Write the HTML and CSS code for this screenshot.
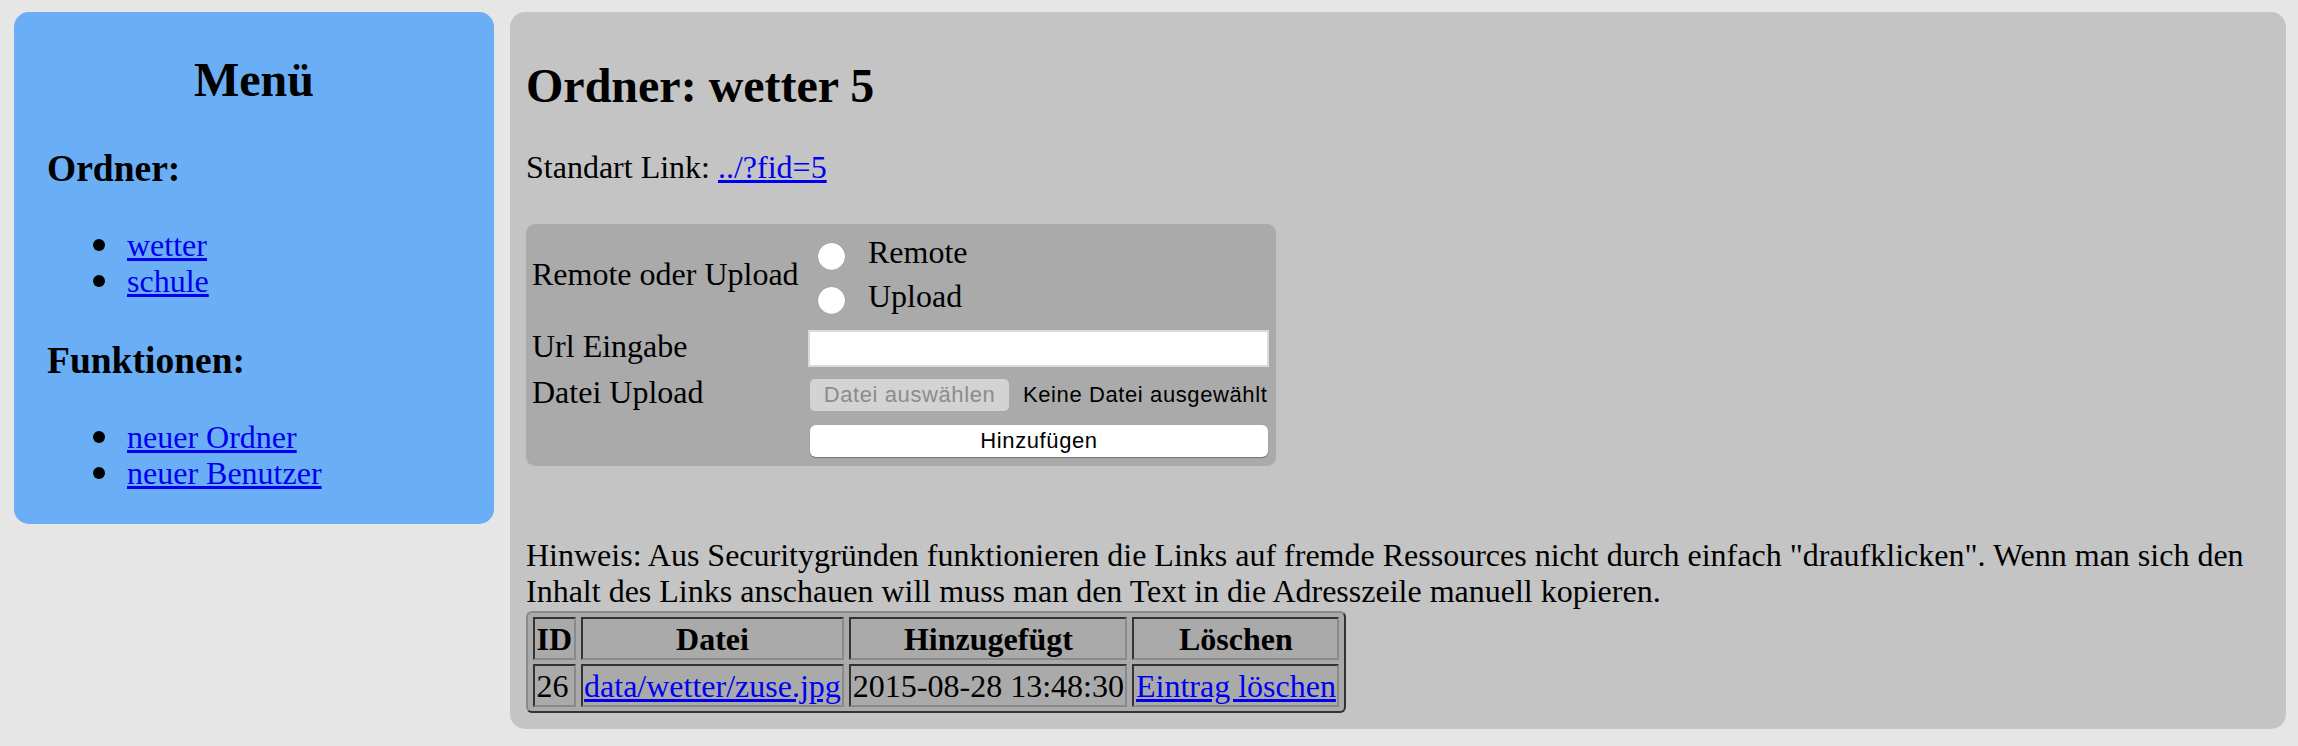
FILE: index.html
```html
<!DOCTYPE html>
<html lang="de">
<head>
<meta charset="utf-8">
<title>Ordner: wetter 5</title>
<link rel="stylesheet" href="styles.css">
</head>
<body>
  <aside class="sidebar">
    <h2 class="menu-title">Menü</h2>
    <h3 class="side-head">Ordner:</h3>
    <ul class="side-list">
      <li><a href="#">wetter</a></li>
      <li><a href="#">schule</a></li>
    </ul>
    <h3 class="side-head">Funktionen:</h3>
    <ul class="side-list last">
      <li><a href="#">neuer Ordner</a></li>
      <li><a href="#">neuer Benutzer</a></li>
    </ul>
  </aside>

  <main class="content">
    <h2 class="page-title">Ordner: wetter 5</h2>
    <p class="std-link">Standart Link: <a href="#">../?fid=5</a></p>

    <form class="upload-form">
      <div class="frow frow-radio">
        <div class="flabel flabel-radio">Remote oder Upload</div>
        <div class="radio-group">
          <label class="opt"><span class="radio"></span><span class="opt-text">Remote</span></label>
          <label class="opt"><span class="radio"></span><span class="opt-text">Upload</span></label>
        </div>
      </div>
      <div class="frow frow-url">
        <div class="flabel">Url Eingabe</div>
        <input class="url-input" type="text">
      </div>
      <div class="frow frow-file">
        <div class="flabel">Datei Upload</div>
        <span class="file-btn">Datei auswählen</span>
        <span class="file-none">Keine Datei ausgewählt</span>
      </div>
      <div class="frow frow-submit">
        <span class="submit-btn">Hinzufügen</span>
      </div>
    </form>

    <p class="hint">Hinweis: Aus Securitygründen funktionieren die Links auf fremde Ressources nicht durch einfach "draufklicken". Wenn man sich den Inhalt des Links anschauen will muss man den Text in die Adresszeile manuell kopieren.</p>

    <table class="entries">
      <tr>
        <th>ID</th>
        <th>Datei</th>
        <th>Hinzugefügt</th>
        <th>Löschen</th>
      </tr>
      <tr>
        <td>26</td>
        <td><a href="#">data/wetter/zuse.jpg</a></td>
        <td>2015-08-28 13:48:30</td>
        <td><a href="#">Eintrag löschen</a></td>
      </tr>
    </table>
  </main>
</body>
</html>
```

FILE: styles.css
```css
html, body {
  height: 100%;
}

body {
  margin: 0;
  padding: 12px 12px 0 14px;
  box-sizing: border-box;
  background: #e6e6e6;
  display: flex;
  align-items: flex-start;
  gap: 16px;
  font-family: "Liberation Serif", "Times New Roman", serif;
  font-size: 32px;
  line-height: 36px;
  color: #000;
}

a {
  color: #0000ee;
  text-decoration: underline;
}

/* Sidebar */
.sidebar {
  width: 480px;
  flex: none;
  box-sizing: border-box;
  padding: 0 33px;
  background: #6aaef6;
  border-radius: 15px;
  display: flow-root;
}

.menu-title {
  margin: 41px 0 0;
  font-size: 48px;
  line-height: 54px;
  font-weight: bold;
  text-align: center;
}

.side-head {
  margin: 41px 0 0;
  font-size: 37.5px;
  line-height: 42px;
  font-weight: bold;
}

.side-list {
  list-style: none;
  margin: 37px 0 0;
  padding: 0 0 0 46px;
}

.side-list.last {
  margin-bottom: 33px;
}

.side-list li {
  display: flex;
  align-items: center;
  gap: 22px;
  height: 36px;
}

.side-list li::before {
  content: "";
  width: 12px;
  height: 12px;
  border-radius: 50%;
  background: #000;
  flex: none;
}

/* Main content */
.content {
  flex: 1;
  min-width: 0;
  box-sizing: border-box;
  padding: 7px 16px 16px;
  background: #c4c4c4;
  border-radius: 15px;
  display: flow-root;
}

.page-title {
  margin: 40px 0 0;
  font-size: 48px;
  line-height: 54px;
  font-weight: bold;
}

.std-link {
  margin: 36px 0 0;
}

/* Upload form */
.upload-form {
  margin: 39px 0 0;
  width: 750px;
  box-sizing: border-box;
  padding: 8px 7px 9px 6px;
  background: #aaaaaa;
  border-radius: 9px;
}

.frow {
  display: flex;
  align-items: flex-start;
}

.flabel {
  width: 276px;
  flex: none;
  white-space: nowrap;
}

.frow-radio {
  height: 88px;
}

.flabel-radio {
  margin-top: 24px;
}

.radio-group {
  display: flex;
  flex-direction: column;
}

.opt {
  display: flex;
  align-items: flex-start;
  height: 44px;
}

.radio {
  width: 27px;
  height: 27px;
  margin: 11px 0 0 10px;
  border-radius: 50%;
  background: #fff;
  box-shadow: 0 0 1px rgba(0, 0, 0, 0.35), inset 0 -1px 1px rgba(0, 0, 0, 0.08);
  flex: none;
}

.opt-text {
  margin: 2px 0 0 23px;
}

.frow-url {
  margin-top: 8px;
}

.url-input {
  margin: 2px 0 0;
  width: 461px;
  height: 37px;
  box-sizing: border-box;
  border: 2px solid #dadada;
  background: #fff;
  padding: 0 4px;
  font: inherit;
  outline: none;
}

.frow-file {
  margin-top: 7px;
}

.file-btn,
.file-none,
.submit-btn {
  font-family: "Liberation Sans", Arial, sans-serif;
  font-size: 22px;
  letter-spacing: 0.6px;
  line-height: 32px;
}

.file-btn {
  margin: 5px 0 0 2px;
  width: 199px;
  height: 32px;
  box-sizing: border-box;
  text-align: center;
  background: #d3d3d3;
  color: #8c8c8c;
  border-radius: 5px;
  flex: none;
}

.file-none {
  margin: 5px 0 0 14px;
  color: #000;
  white-space: nowrap;
}

.frow-submit {
  margin-top: 14px;
  padding-left: 278px;
}

.submit-btn {
  display: block;
  width: 458px;
  height: 32px;
  text-align: center;
  background: #fff;
  color: #000;
  border-radius: 6px;
  box-shadow: 0 1px 1px rgba(0, 0, 0, 0.35);
}

/* Hint */
.hint {
  margin: 71px 0 0;
}

/* Table */
.entries {
  margin-top: 2px;
  border-collapse: separate;
  border-spacing: 5px 4px;
  border: 2px solid;
  border-color: #8a8a8a #333 #333 #8a8a8a;
  border-radius: 6px;
  background: #aaaaaa;
}

.entries th,
.entries td {
  border: 2px solid;
  border-color: #333 #8a8a8a #8a8a8a #333;
  padding: 1.5px;
  line-height: 36px;
  background: #aaaaaa;
  white-space: nowrap;
}

.entries th {
  font-weight: bold;
  text-align: center;
}

.entries td {
  text-align: left;
}
```
